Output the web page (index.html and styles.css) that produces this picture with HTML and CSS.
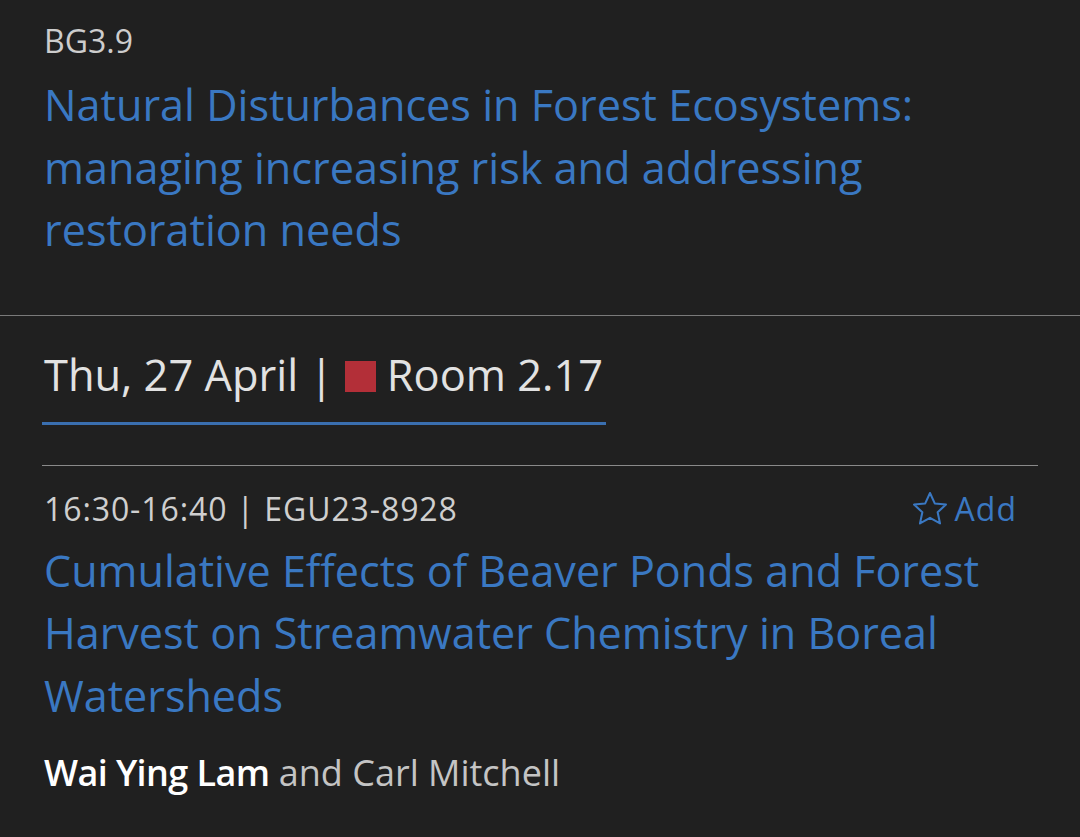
FILE: index.html
```html
<!DOCTYPE html>
<html lang="en">
<head>
<meta charset="utf-8">
<title>BG3.9</title>
<link rel="stylesheet" href="styles.css">
</head>
<body>
<section class="session">
  <div class="session-code">BG3.9</div>
  <h1 class="session-title">Natural Disturbances in Forest Ecosystems: managing increasing risk and addressing restoration needs</h1>
</section>
<div class="days">
  <div class="day-tab">Thu, 27 April <span class="pipe">|</span> <span class="room-square"></span> Room 2.17</div>
</div>
<div class="list">
  <article class="item">
    <div class="item-head">
      <div class="item-meta">16:30-16:40 <span class="pipe">|</span> EGU23-8928</div>
      <div class="add">
        <svg class="star" viewBox="2 2 20 20" width="34" height="34"><path d="M12 2.6l2.8 6.1 6.6.7-4.9 4.5 1.4 6.6L12 17.2l-5.9 3.3 1.4-6.6-4.9-4.5 6.6-.7z" fill="none" stroke="#3a78c2" stroke-width="1.2" stroke-linejoin="round"/></svg>
        <span>Add</span>
      </div>
    </div>
    <h2 class="item-title">Cumulative Effects of Beaver Ponds and Forest Harvest on Streamwater Chemistry in Boreal Watersheds</h2>
    <div class="authors"><strong>Wai Ying Lam</strong> and Carl Mitchell</div>
  </article>
</div>
</body>
</html>
```
FILE: styles.css
```css
html, body {
  margin: 0;
  padding: 0;
  background: #202020;
}
body {
  font-family: "Open Sans", "Noto Sans", sans-serif;
  color: #d4d4d4;
  width: 1080px;
  height: 837px;
  overflow: hidden;
}
.session {
  padding: 19px 44px 53px 44px;
  border-bottom: 1px solid #7a7a7a;
}
.session-code {
  font-size: 32px;
  line-height: 44px;
  color: #cdcdcd;
}
.session-title {
  margin: 11px 0 0 0;
  font-weight: 400;
  font-size: 43.2px;
  line-height: 62.5px;
  color: #3a78c2;
}
.days {
  padding: 29px 42px 0 42px;
}
.day-tab {
  display: inline-block;
  font-size: 43.4px;
  line-height: 60px;
  color: #e2e2e2;
  padding: 0 3px 17px 2px;
  border-bottom: 3px solid #3a6fb0;
}
.room-square {
  display: inline-block;
  width: 31px;
  height: 31px;
  background: #b32f38;
  vertical-align: -1px;
}
.list {
  margin: 40px 42px 0 42px;
  border-top: 1px solid #8a8a8a;
}
.item {
  padding: 21px 21px 0 2px;
}
.item-head {
  display: flex;
  justify-content: space-between;
  align-items: center;
}
.item-meta {
  font-size: 32px;
  line-height: 44px;
  letter-spacing: 0.9px;
  color: #cfcfcf;
}
.add {
  display: flex;
  align-items: center;
  gap: 8px;
  font-size: 32px;
  line-height: 44px;
  letter-spacing: 1px;
  color: #3a78c2;
}
.star {
  display: block;
}
.item-title {
  margin: 9px 0 0 0;
  font-weight: 400;
  font-size: 43.1px;
  line-height: 62.5px;
  color: #3a78c2;
}
.authors {
  margin-top: 21px;
  font-size: 36px;
  line-height: 50px;
  color: #c4c4c4;
}
.authors strong {
  font-weight: 600;
  letter-spacing: -0.6px;
  color: #ffffff;
}
```
